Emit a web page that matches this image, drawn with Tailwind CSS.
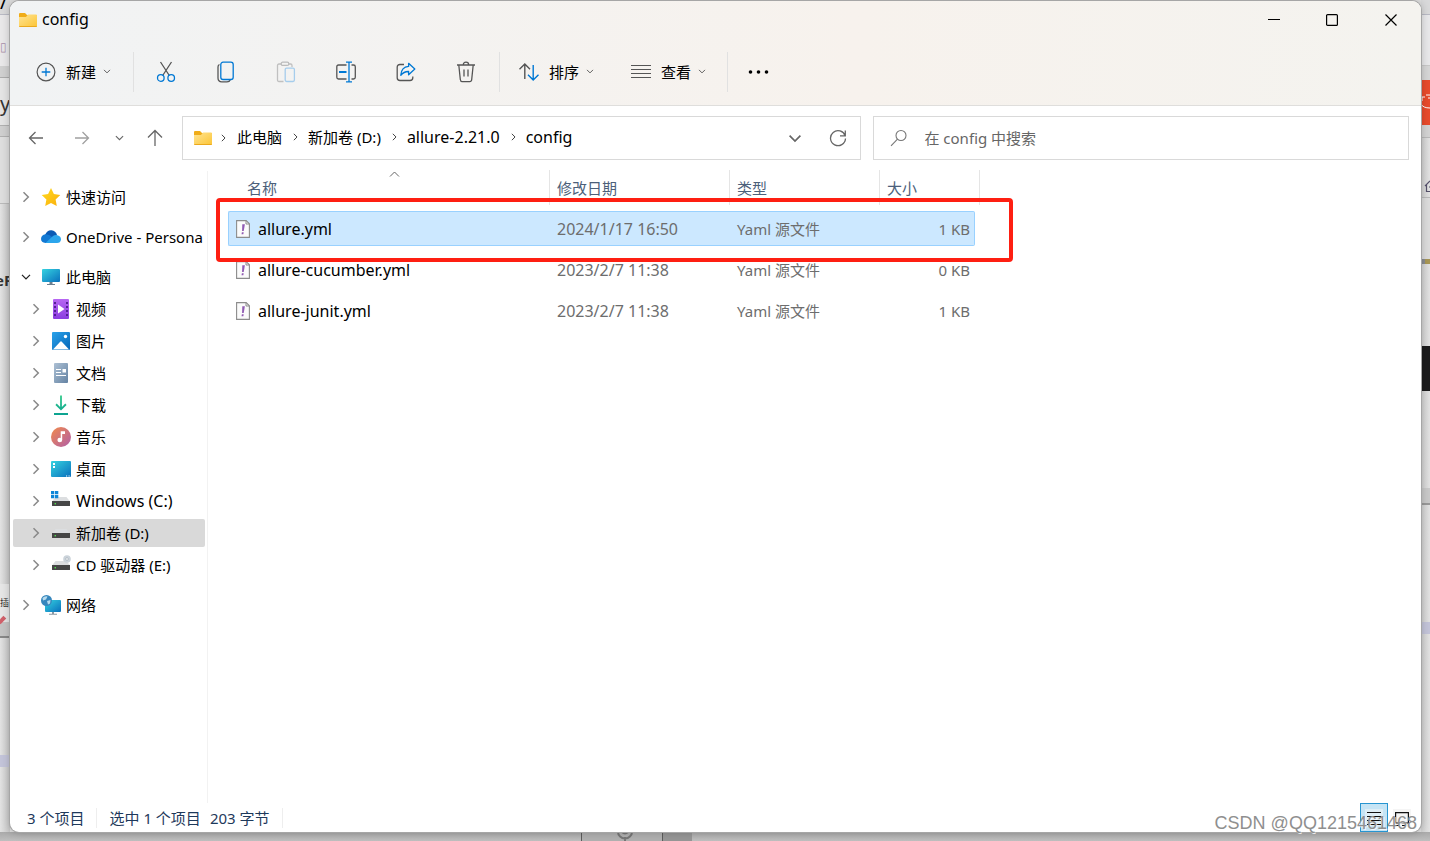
<!DOCTYPE html>
<html lang="zh-CN">
<head>
<meta charset="utf-8">
<title>config</title>
<script src="https://cdn.jsdelivr.net/npm/@tailwindcss/browser@4"></script>
</head>
<body class="relative h-screen overflow-hidden bg-[#dedede] pt-px pr-[9px] pb-[9px] pl-[10px] font-['Noto_Sans','Noto_Sans_CJK_SC',sans-serif] text-[15px] leading-5 text-black">

<svg class="absolute size-0" aria-hidden="true">
  <defs>
    <linearGradient id="gFolder" x1="0" y1="0" x2="1" y2="1"><stop offset="0" stop-color="#ffe493"/><stop offset="1" stop-color="#fcc536"/></linearGradient>
    <linearGradient id="gScreen" x1="0" y1="0" x2="1" y2="1"><stop offset="0" stop-color="#35d3e0"/><stop offset="1" stop-color="#0a70bd"/></linearGradient>
    <linearGradient id="gVideo" x1="0" y1="0" x2="0" y2="1"><stop offset="0" stop-color="#b767f2"/><stop offset="1" stop-color="#8b3de0"/></linearGradient>
    <linearGradient id="gPic" x1="0" y1="0" x2="1" y2="1"><stop offset="0" stop-color="#2aa2ea"/><stop offset="1" stop-color="#0667b8"/></linearGradient>
    <linearGradient id="gDoc" x1="0" y1="0" x2="1" y2="1"><stop offset="0" stop-color="#adc0d4"/><stop offset="1" stop-color="#6483a3"/></linearGradient>
    <linearGradient id="gMusic" x1="0" y1="0" x2="1" y2="1"><stop offset="0" stop-color="#f28a4b"/><stop offset="1" stop-color="#b05fa8"/></linearGradient>
    <linearGradient id="gDown" x1="0" y1="0" x2="0" y2="1"><stop offset="0" stop-color="#32c98a"/><stop offset="1" stop-color="#0ba291"/></linearGradient>
    <linearGradient id="gStar" x1="0" y1="0" x2="1" y2="1"><stop offset="0" stop-color="#ffdb1f"/><stop offset="1" stop-color="#fbae0c"/></linearGradient>
    <symbol id="folder" viewBox="0 0 18 14"><path d="M0 1.2Q0 0 1 0H6L8 2H18V12H0Z" fill="#f0ac18"/><path d="M0 4H7L9 1.6H17Q18 1.6 18 2.6V13Q18 14 17 14H1Q0 14 0 13Z" fill="url(#gFolder)"/><path d="M.3 13.5H17.7" stroke="#eba91d" stroke-width="1"/></symbol>
    <symbol id="right" viewBox="0 0 10 12"><path d="M2.5 1.2 7.3 6 2.5 10.8" fill="none" stroke="currentColor" stroke-width="1.5"/></symbol>
    <symbol id="down" viewBox="0 0 12 8"><path d="M1.2 1.4 6 6.2 10.8 1.4" fill="none" stroke="currentColor" stroke-width="1.5"/></symbol>
    <symbol id="drive" viewBox="0 0 20 20"><path d="M4.5 6H15.5L19 10.5H1Z" fill="#dcdee0"/><path d="M1 10H19V14.5Q19 15 18.4 15H1.6Q1 15 1 14.5Z" fill="#464646"/><rect x="3.6" y="12" width="1.4" height="1.4" fill="#52dd4f"/></symbol>
    <symbol id="yaml" viewBox="0 0 14 18"><path d="M.6.6H10.2L13.4 3.8V17.4H.6Z" fill="#fbfbfb" stroke="#8c8c8c" stroke-width="1.1"/><path d="M10 .8V4H13.2" fill="none" stroke="#8c8c8c"/><path d="M6.3 4.2H8.9L7.7 11H6.1Z" fill="#905bb3"/><path d="M5.9 12.2H7.7L7.3 14.2H5.5Z" fill="#905bb3"/></symbol>
  </defs>
</svg>

<!-- Desktop behind the window -->
<div class="absolute inset-0 flex flex-col" aria-hidden="true">
  <div class="flex h-[832px] justify-between">
    <div class="flex w-[10px] flex-col overflow-hidden bg-linear-to-r from-[#e2e2e2] to-[#c6c6c6] text-[20px]">
      <div class="h-[15px] border-b border-[#b9bac4] bg-[#d9d9da] leading-[4px]">/</div>
      <div class="h-[51px] bg-[#e9e8e9] pt-[22px] text-[12px] text-[#a98fa9]">▯</div>
      <div class="h-3 border-b border-[#acacac] bg-[#d0d0d0]"></div>
      <div class="h-[47px] bg-[#e4e4e4] pt-[16px] leading-[20px] text-[#333333]">y</div>
      <div class="h-3 border-y border-[#b0b0b0] bg-[#cfcfcf]"></div>
      <div class="h-[67px] border-b border-[#b9b9b9] bg-[#dedede]"></div>
      <div class="h-[380px] pt-[66px] text-[15px] font-bold text-[#333333]"><span class="-ml-[5px]">eF</span></div>
      <div class="h-[38px] bg-[#e6e6e6] pt-[10px] text-[9px] leading-[18px]"><span class="text-[#333333]">插</span><span class="mt-1 block h-2 w-1 rotate-45 bg-[#d0606a]"></span></div>
      <div class="h-4 border-b-2 border-[#888888] bg-[#c4c4c4]"></div>
      <div class="h-[117px]"></div>
      <div class="h-3 bg-[#c3c4d9]"></div>
    </div>
    <div class="flex w-[9px] flex-col overflow-hidden bg-linear-to-r from-[#cfcfcf] to-[#e2e2e2]">
      <div class="h-[15px] border-b border-[#b9bac4] bg-[#d9d9da]"></div>
      <div class="h-[51px] border-b border-[#c8c8c8] bg-[#e8e8ea]"></div>
      <div class="h-[14px] bg-[#d6d6d6]"></div>
      <svg class="h-[45px] w-[9px] shrink-0" viewBox="0 0 9 45"><path d="M0 0H9V45H0Z" fill="#e84b2c"/><path d="M9 15H5M4 17H1L1 21M0 24Q2 28 9 28M7 18H9" fill="none" stroke="#fff" stroke-width="1"/></svg>
      <div class="h-[13px] border-b border-[#b9b9b9] bg-[#d3d3d3]"></div>
      <div class="h-[42px]"></div>
      <svg class="h-3 w-[9px] shrink-0" viewBox="0 0 9 12"><path d="M4 6 9 1M5.500 5V11.500H9M8 7H9" fill="none" stroke="#55506a" stroke-width="1.2"/></svg>
      <div class="mt-[5px] h-[62px] border-t border-[#b9b9b9] bg-[#dcdcdc]"></div>
      <div class="flex h-[5px]"><span class="w-1 bg-[#898c92]"></span><span class="flex-1 bg-[#a89755]"></span></div>
      <div class="h-[82px]"></div>
      <div class="h-[45px] bg-[#1b1b1c]"></div>
      <div class="h-[97px]"></div>
      <div class="h-[17px] border-b-2 border-[#999999] bg-[#c9c9c9]"></div>
      <div class="h-[117px]"></div>
      <div class="h-3 bg-[#c3c4d9]"></div>
    </div>
  </div>
  <div class="flex flex-1 bg-linear-to-b from-[#a9a9a9] to-[#bfbfbf]">
    <div class="w-[581px]"></div>
    <div class="flex w-[82px] justify-center border-x border-[#5c5c5c] bg-[#b0b0b0]"><svg class="ml-[6px] h-[9px] w-[18px]" viewBox="0 0 18 9"><path d="M2 0A7 6.500 0 0 0 16 0M9 5V9M6 0Q9 3 12 0" fill="none" stroke="#777" stroke-width="2"/></svg></div>
    <div class="w-[29px] bg-[#969696]"></div>
  </div>
</div>

<!-- Explorer window -->
<div class="relative flex h-full flex-col overflow-hidden rounded-[9px] bg-white shadow-[0_0_0_1px_#a6a6a6,0_0_8px_rgb(0_0_0/0.25)]">
  <div class="border-b border-[#dfdedc] bg-linear-to-r from-[#f1f3f4] via-[#f7f2ed] via-60% to-[#f4f3ef]">
    <header class="flex h-[37px] items-center pl-[9px]">
      <svg class="h-[14px] w-[18px]"><use href="#folder"/></svg>
      <h1 class="ml-[5px] flex-1 pb-[2px] text-base leading-5">config</h1>
      <button class="flex h-full w-[58px] items-center justify-center" aria-label="最小化"><svg class="size-3" viewBox="0 0 12 12"><path d="M0 5.500H12" stroke="#000"/></svg></button>
      <button class="flex h-full w-[58px] items-center justify-center" aria-label="最大化"><svg class="size-3" viewBox="0 0 12 12"><rect x=".6" y=".6" width="10.800" height="10.800" rx="1" fill="none" stroke="#000" stroke-width="1.200"/></svg></button>
      <button class="flex h-full w-[60px] items-center justify-center" aria-label="关闭"><svg class="size-3" viewBox="0 0 12 12"><path d="M.5.5 11.500 11.500M11.500.5.5 11.500" stroke="#000" stroke-width="1.200"/></svg></button>
    </header>

    <nav class="flex h-[67px] items-center" aria-label="命令栏">
      <button class="flex h-10 w-[124px] items-center border-r border-[#e1e1e1] pl-[26px]">
        <svg class="size-5" viewBox="0 0 20 20" fill="none"><circle cx="10" cy="10" r="8.900" stroke="#555" stroke-width="1.200"/><path d="M10 5.700V14.300M5.700 10H14.300" stroke="#0078d4" stroke-width="1.300"/></svg>
        <span class="ml-[10px]">新建</span>
        <svg class="ml-[7px] h-[5px] w-2 text-[#555555]"><use href="#down"/></svg>
      </button>
      <div class="flex h-10 w-[366px] items-center border-r border-[#e1e1e1] pl-[2px]">
        <button class="flex w-[60px] justify-center" aria-label="剪切"><svg class="h-[22px] w-5" viewBox="0 0 20 22" fill="none" stroke-width="1.300"><path d="M4.500 1 13.300 14.500M15.500 1 6.700 14.500" stroke="#555"/><circle cx="4.800" cy="17" r="3.300" stroke="#0078d4"/><circle cx="15.200" cy="17" r="3.300" stroke="#0078d4"/></svg></button>
        <button class="flex w-[60px] justify-center" aria-label="复制"><svg class="h-[22px] w-5" viewBox="0 0 20 22" fill="none" stroke-width="1.300"><path d="M3.500 3.500Q2 4 2 6V17Q2 20.800 5.800 20.800H11Q13.500 20.800 14.200 19" stroke="#555"/><rect x="4.800" y="1.200" width="12.400" height="17.300" rx="2.300" stroke="#0078d4"/></svg></button>
        <button class="flex w-[60px] justify-center" aria-label="粘贴" disabled><svg class="h-[22px] w-5" viewBox="0 0 20 22" fill="none" stroke-width="1.300"><path d="M7.500 20.500H3Q1.500 20.500 1.500 19V4.500Q1.500 3 3 3H5M13 3H14.700Q16 3 16 4.500V6" stroke="#c0c0c0"/><rect x="5.200" y="1.200" width="7.600" height="3.200" rx="1.500" stroke="#bbb"/><rect x="9.200" y="7.200" width="9.200" height="13.300" rx="1.400" stroke="#a6cdec"/></svg></button>
        <button class="flex w-[60px] justify-center" aria-label="重命名"><svg class="h-[22px] w-5" viewBox="0 0 20 22" fill="none" stroke-width="1.300"><path d="M10.500 4H2.500Q.8 4 .8 5.700V16.300Q.8 18 2.500 18H10.500M15.500 4H17.500Q19.300 4 19.300 5.700V16.300Q19.300 18 17.500 18H15.500" stroke="#555"/><path d="M13 1.500V20.500M10 1.200H16M10 20.800H16" stroke="#0078d4"/><path d="M3 11H10.500" stroke="#0078d4" stroke-width="2"/></svg></button>
        <button class="flex w-[60px] justify-center" aria-label="共享"><svg class="h-[22px] w-5" viewBox="0 0 20 22" fill="none" stroke-width="1.300" stroke-linejoin="round"><path d="M8 3.500H4Q1.200 3.500 1.200 6.300V16.700Q1.200 19.500 4 19.500H14Q16.800 19.500 16.800 16.700V15.500" stroke="#555"/><path d="M12.600 2.300 18.800 8 12.600 13.700V10.500Q8 10.300 4.800 14.300 5.300 6 12.600 5.400Z" stroke="#0078d4"/></svg></button>
        <button class="flex w-[60px] justify-center" aria-label="删除"><svg class="h-[22px] w-5" viewBox="0 0 20 22" fill="none" stroke="#555" stroke-width="1.300"><path d="M1 4H19M7.300 4Q7.300 1.200 10 1.200T12.700 4M2.800 4 4.300 18.500Q4.500 20.600 6.300 20.600H13.700Q15.500 20.600 15.700 18.500L17.200 4M8 8.500V15.500M12 8.500V15.500"/></svg></button>
      </div>
      <div class="flex h-10 w-[228px] items-center border-r border-[#e1e1e1] pl-[19px]">
        <button class="flex items-center">
          <svg class="size-5" viewBox="0 0 20 20" fill="none" stroke-width="1.400"><path d="M5.800 17V2M.5 7.300 5.800 2 11 7.300" stroke="#555"/><path d="M14.200 3V18M9 12.700 14.200 18 19.500 12.700" stroke="#0078d4"/></svg>
          <span class="ml-[10px]">排序</span>
          <svg class="ml-[7px] h-[5px] w-2 text-[#555555]"><use href="#down"/></svg>
        </button>
        <button class="ml-[37px] flex items-center">
          <svg class="size-5" viewBox="0 0 20 20" stroke="#555" stroke-width="1.200"><path d="M0 3.500H20M0 7.500H20M0 11.500H20M0 15.500H20"/></svg>
          <span class="ml-[10px]">查看</span>
          <svg class="ml-[7px] h-[5px] w-2 text-[#555555]"><use href="#down"/></svg>
        </button>
      </div>
      <button class="ml-5 flex h-10 items-center" aria-label="更多"><svg class="h-1 w-[22px]" viewBox="0 0 22 4"><circle cx="2.500" cy="2" r="1.800"/><circle cx="10.500" cy="2" r="1.800"/><circle cx="18.500" cy="2" r="1.800"/></svg></button>
    </nav>
  </div>

  <div class="flex h-[58px] shrink-0 items-end pr-3 pb-1">
    <div class="flex h-11 w-[172px] shrink-0 items-center pl-[18px] text-[#666666]">
      <button aria-label="后退"><svg class="size-4" viewBox="0 0 16 16" fill="none" stroke="currentColor" stroke-width="1.300"><path d="M15 8H1.500M7.500 2 1.500 8 7.500 14"/></svg></button>
      <button class="ml-[30px] text-[#a0a0a0]" aria-label="前进" disabled><svg class="size-4" viewBox="0 0 16 16" fill="none" stroke="currentColor" stroke-width="1.300"><path d="M1 8H14.500M8.500 2 14.500 8 8.500 14"/></svg></button>
      <button class="ml-[25px]" aria-label="最近浏览的位置"><svg class="h-[6px] w-[9px]"><use href="#down"/></svg></button>
      <button class="ml-[23px]" aria-label="上移"><svg class="h-[18px] w-4" viewBox="0 0 16 18" fill="none" stroke="currentColor" stroke-width="1.300"><path d="M8 17V1.500M1 8.500 8 1.500 15 8.500"/></svg></button>
    </div>
    <div class="flex h-11 flex-[667] items-center border border-[#d9d9d9] pl-[11px]">
      <svg class="h-[14px] w-[18px] shrink-0"><use href="#folder"/></svg>
      <svg class="ml-2 h-2 w-[7px] text-[#444444]"><use href="#right"/></svg>
      <ol class="ml-[10px] flex items-center gap-[10px] pb-[2px] whitespace-nowrap">
        <li><a href="#">此电脑</a></li>
        <li class="flex items-center gap-[9px]"><svg class="h-2 w-[7px] text-[#444444]"><use href="#right"/></svg><a href="#">新加卷 (D:)</a></li>
        <li class="flex items-center gap-[9px]"><svg class="h-2 w-[7px] text-[#444444]"><use href="#right"/></svg><a href="#" class="text-base leading-5">allure-2.21.0</a></li>
        <li class="flex items-center gap-[9px]"><svg class="h-2 w-[7px] text-[#444444]"><use href="#right"/></svg><a href="#" class="text-base leading-5">config</a></li>
      </ol>
      <button class="ml-auto text-[#666666]" aria-label="展开地址"><svg class="h-[9px] w-[14px]"><use href="#down"/></svg></button>
      <button class="mr-[13px] ml-[27px] text-[#666666]" aria-label="刷新"><svg class="size-[18px]" viewBox="0 0 18 18" fill="none" stroke="currentColor" stroke-width="1.300"><path d="M16.200 7A7.500 7.500 0 1 0 16.500 9.500M16.300 1.500V6.800H11"/></svg></button>
    </div>
    <label class="ml-3 flex h-11 flex-[518] items-center border border-[#d9d9d9] pl-4">
      <svg class="size-[18px] shrink-0" viewBox="0 0 18 18" fill="none" stroke="#777" stroke-width="1.100"><circle cx="11" cy="6.500" r="5"/><path d="M7.500 10.200 1 16.800"/></svg>
      <input class="ml-4 min-w-0 flex-1 outline-none placeholder:text-[#666666]" type="search" aria-label="在 config 中搜索" placeholder="在 config 中搜索">
    </label>
  </div>

  <div class="flex min-h-0 flex-1">
    <aside class="w-[197px] shrink-0 overflow-hidden pt-[17px] pr-[2px] pl-[3px]">
      <ul class="flex flex-col gap-2 whitespace-nowrap">
        <li><a href="#" class="flex h-8 items-center pl-2"><svg class="h-3 w-[10px] shrink-0 text-[#888888]"><use href="#right"/></svg>
          <svg class="mr-[5px] ml-[10px] size-5 shrink-0" viewBox="0 0 20 20"><path d="M10 1 12.900 7 19.300 7.900 14.600 12.400 15.800 19 10 15.900 4.200 19 5.400 12.400.7 7.900 7.100 7Z" fill="url(#gStar)"/></svg>快速访问</a></li>
        <li><a href="#" class="flex h-8 items-center pl-2"><svg class="h-3 w-[10px] shrink-0 text-[#888888]"><use href="#right"/></svg>
          <svg class="mr-[5px] ml-[10px] size-5 shrink-0" viewBox="0 0 20 20"><path d="M4 8Q6 3 10.500 3.300 14.800 3.700 16 8L11 13 3 12Z" fill="#0a5ab5"/><path d="M4.500 16Q0 15.800 0 11.800.3 8 4.500 7.300 8 7 11 10L16 15Z" fill="#1279d3"/><path d="M4.500 16 12 9Q14 7.300 16.500 8.300 20 9.300 20 12.500 19.600 16 16 16Z" fill="#2ba5ec"/></svg>OneDrive - Persona</a></li>
        <li><a href="#" class="flex h-8 items-center pl-2"><svg class="h-2 w-[10px] shrink-0 text-[#222222]" viewBox="0 0 12 8"><use href="#down"/></svg>
          <svg class="mr-[5px] ml-[10px] size-5 shrink-0" viewBox="0 0 20 20"><rect x="1" y="2" width="18" height="13" rx="1" fill="url(#gScreen)"/><path d="M8.500 15H11.500V17H14V18H6V17H8.500Z" fill="#6d7f8f"/></svg>此电脑</a>
          <ul>
            <li><a href="#" class="flex h-8 items-center pl-[18px]"><svg class="h-3 w-[10px] shrink-0 text-[#888888]"><use href="#right"/></svg>
              <svg class="mr-[5px] ml-[10px] size-5 shrink-0" viewBox="0 0 20 20"><rect x="2" y="0" width="16" height="20" rx="1" fill="url(#gVideo)"/><path d="M7 5.500 13.500 10 7 14.500Z" fill="#fff"/><path d="M4 3V18M16 3V18" stroke="#4c1b8c" stroke-width="1.800" stroke-dasharray="2 2"/></svg>视频</a></li>
            <li><a href="#" class="flex h-8 items-center pl-[18px]"><svg class="h-3 w-[10px] shrink-0 text-[#888888]"><use href="#right"/></svg>
              <svg class="mr-[5px] ml-[10px] size-5 shrink-0" viewBox="0 0 20 20"><rect x="1" y="1" width="18" height="18" rx="1" fill="url(#gPic)"/><path d="M2 18.500 9.200 10.700Q10 10 10.800 10.700L18 18.500Z" fill="#fff"/><circle cx="14.500" cy="5.500" r="1.700" fill="#fff"/></svg>图片</a></li>
            <li><a href="#" class="flex h-8 items-center pl-[18px]"><svg class="h-3 w-[10px] shrink-0 text-[#888888]"><use href="#right"/></svg>
              <svg class="mr-[5px] ml-[10px] size-5 shrink-0" viewBox="0 0 20 20"><rect x="3" y="0" width="14" height="20" rx="1" fill="url(#gDoc)"/><path d="M5 6.500H10M5 9.500H10M5 12.500H15" stroke="#fff" stroke-width="1.200"/><rect x="11.500" y="6" width="3.500" height="3.500" fill="#fff"/></svg>文档</a></li>
            <li><a href="#" class="flex h-8 items-center pl-[18px]"><svg class="h-3 w-[10px] shrink-0 text-[#888888]"><use href="#right"/></svg>
              <svg class="mr-[5px] ml-[10px] size-5 shrink-0" viewBox="0 0 20 20"><path d="M9.100.5H10.900V12L14.300 8.600 15.600 9.900 10 15.500 4.400 9.900 5.700 8.600 9.100 12ZM3 18H17V20H3Z" fill="url(#gDown)"/></svg>下载</a></li>
            <li><a href="#" class="flex h-8 items-center pl-[18px]"><svg class="h-3 w-[10px] shrink-0 text-[#888888]"><use href="#right"/></svg>
              <svg class="mr-[5px] ml-[10px] size-5 shrink-0" viewBox="0 0 20 20"><circle cx="10" cy="10" r="10" fill="url(#gMusic)"/><ellipse cx="8.800" cy="13" rx="2.400" ry="2.200" fill="#fff"/><path d="M9.700 13V4.300H14V7H11.200V13Z" fill="#fff"/></svg>音乐</a></li>
            <li><a href="#" class="flex h-8 items-center pl-[18px]"><svg class="h-3 w-[10px] shrink-0 text-[#888888]"><use href="#right"/></svg>
              <svg class="mr-[5px] ml-[10px] size-5 shrink-0" viewBox="0 0 20 20"><rect x="0" y="2" width="20" height="16" rx="1" fill="url(#gScreen)"/><path d="M2 4H4V6H2ZM2 7H4V9H2ZM15 16.500H16.200V17.500H15ZM17.500 16.500H18.700V17.500H17.500Z" fill="#fff"/></svg>桌面</a></li>
            <li><a href="#" class="flex h-8 items-center pl-[18px]"><svg class="h-3 w-[10px] shrink-0 text-[#888888]"><use href="#right"/></svg>
              <svg class="mr-[5px] ml-[10px] size-5 shrink-0" viewBox="0 0 20 20"><use href="#drive" width="20" height="20"/><path d="M0 0H3.300V3.300H0ZM4 0H7.300V3.300H4ZM0 4H3.300V7.300H0ZM4 4H7.300V7.300H4Z" fill="#0c85d8"/></svg><span class="text-base leading-5">Windows (C:)</span></a></li>
            <li class="py-[2px]"><a href="#" aria-current="true" class="flex h-7 items-center rounded-[2px] bg-[#d9d9d9] pl-[18px]"><svg class="h-3 w-[10px] shrink-0 text-[#888888]"><use href="#right"/></svg>
              <svg class="mr-[5px] ml-[10px] size-5 shrink-0" viewBox="0 0 20 20"><use href="#drive" width="20" height="20"/></svg>新加卷 (D:)</a></li>
            <li><a href="#" class="flex h-8 items-center pl-[18px]"><svg class="h-3 w-[10px] shrink-0 text-[#888888]"><use href="#right"/></svg>
              <svg class="mr-[5px] ml-[10px] size-5 shrink-0" viewBox="0 0 20 20"><use href="#drive" width="20" height="20"/><circle cx="16" cy="4" r="3.800" fill="#cbd3da"/><circle cx="16" cy="4" r="1.300" fill="#fff" stroke="#97a3ad" stroke-width=".6"/></svg>CD 驱动器 (E:)</a></li>
          </ul>
        </li>
        <li><a href="#" class="flex h-8 items-center pl-2"><svg class="h-3 w-[10px] shrink-0 text-[#888888]"><use href="#right"/></svg>
          <svg class="mr-[5px] ml-[10px] size-5 shrink-0" viewBox="0 0 20 20"><rect x="4" y="5" width="16" height="12" rx="1" fill="url(#gScreen)"/><path d="M11 17H13V18.800H16V19.800H8V18.800H11Z" fill="#8b98a3"/><circle cx="5.500" cy="5.500" r="5.500" fill="#3787bd"/><path d="M1.500 3Q4 .5 6.500 1.500L5 4.500 2 5.500ZM6 6 9.500 5 9 8.500 7 9.500Z" fill="#b8dcee"/></svg>网络</a></li>
      </ul>
    </aside>

    <main class="relative flex-1 before:absolute before:top-[7px] before:bottom-0 before:left-0 before:w-px before:bg-[#f2f2f2]">
      <table class="ml-[21px] w-[747px] table-fixed border-separate border-spacing-x-0 border-spacing-y-[6px] text-left text-[#6d6d6d]">
        <thead class="text-[#4c607a]">
          <tr class="h-[35px]">
            <th class="relative w-[321px] pl-[19px] font-normal" aria-sort="ascending">名称<svg class="absolute top-px left-[161px] h-[6px] w-[11px]" viewBox="0 0 11 6"><path d="M1 5.500 5.500 1 10 5.500" fill="none" stroke="#666"/></svg></th>
            <th class="w-[180px] border-l border-[#e5e5e5] pl-[7px] font-normal">修改日期</th>
            <th class="w-[150px] border-l border-[#e5e5e5] pl-[7px] font-normal">类型</th>
            <th class="relative border-l border-[#e5e5e5] pl-[7px] font-normal after:absolute after:top-0 after:-right-[5px] after:h-full after:w-px after:bg-[#e5e5e5]">大小</th>
          </tr>
        </thead>
        <tbody>
          <tr class="h-[35px]" aria-selected="true">
            <td class="rounded-l-[2px] border-y border-l border-[#99d1ff] bg-[#cce8ff] pl-[7px] text-base leading-5 text-black"><div class="flex items-center gap-2"><svg class="h-[18px] w-[14px]"><use href="#yaml"/></svg>allure.yml</div></td>
            <td class="border-y border-[#99d1ff] bg-[#cce8ff] pl-2 text-base leading-5">2024/1/17 16:50</td>
            <td class="border-y border-[#99d1ff] bg-[#cce8ff] pl-2">Yaml 源文件</td>
            <td class="rounded-r-[2px] border-y border-r border-[#99d1ff] bg-[#cce8ff] pr-1 text-right">1 KB</td>
          </tr>
          <tr class="h-[35px]">
            <td class="pl-2 text-base leading-5 text-black"><div class="flex items-center gap-2"><svg class="h-[18px] w-[14px]"><use href="#yaml"/></svg>allure-cucumber.yml</div></td>
            <td class="pl-2 text-base leading-5">2023/2/7 11:38</td><td class="pl-2">Yaml 源文件</td><td class="pr-[5px] text-right">0 KB</td>
          </tr>
          <tr class="h-[35px]">
            <td class="pl-2 text-base leading-5 text-black"><div class="flex items-center gap-2"><svg class="h-[18px] w-[14px]"><use href="#yaml"/></svg>allure-junit.yml</div></td>
            <td class="pl-2 text-base leading-5">2023/2/7 11:38</td><td class="pl-2">Yaml 源文件</td><td class="pr-[5px] text-right">1 KB</td>
          </tr>
        </tbody>
      </table>
      <div class="absolute top-[34px] left-[9px] h-16 w-[797px] rounded-[4px] border-4 border-[#fe1f12]" aria-hidden="true"></div>
    </main>
  </div>

  <footer class="flex h-[29px] shrink-0 items-center pl-[17px] text-[#1e395b]">
    <span class="border-r border-[#eeeeee] pr-3">3 个项目</span>
    <span class="pl-3">选中 1 个项目</span>
    <span class="ml-[9px] border-r border-[#eeeeee] pr-3">203 字节</span>
    <button class="ml-auto flex h-full w-7 items-center justify-center border border-[#2795d1] bg-[#c5e4f5]" aria-label="详细信息"><svg class="h-[17px] w-[18px]" viewBox="0 0 18 17"><path d="M0 0H18V17H0Z" fill="#deeef6"/><path d="M2 3.500H16M2 7.500H16M2 11.500H16M2 15.500H16" stroke="#111"/></svg></button>
    <button class="mr-[10px] ml-[5px] flex h-full items-center" aria-label="大缩略图"><svg class="size-[18px]" viewBox="0 0 18 18"><path d="M0 0H18V18H0Z" fill="#f5f5f5"/><path d="M2.600 3.600H15.400V14H2.600ZM2 16.500H6M9 16.500H13" fill="none" stroke="#111" stroke-width="1.200"/></svg></button>
  </footer>
</div>

<div class="pointer-events-none absolute right-[13px] bottom-2 font-['Liberation_Sans',sans-serif] text-lg leading-5 text-[#8f8f8f] [text-shadow:1px_1px_0_rgb(255_255_255/0.8)]">CSDN @QQ1215461468</div>
</body>
</html>
